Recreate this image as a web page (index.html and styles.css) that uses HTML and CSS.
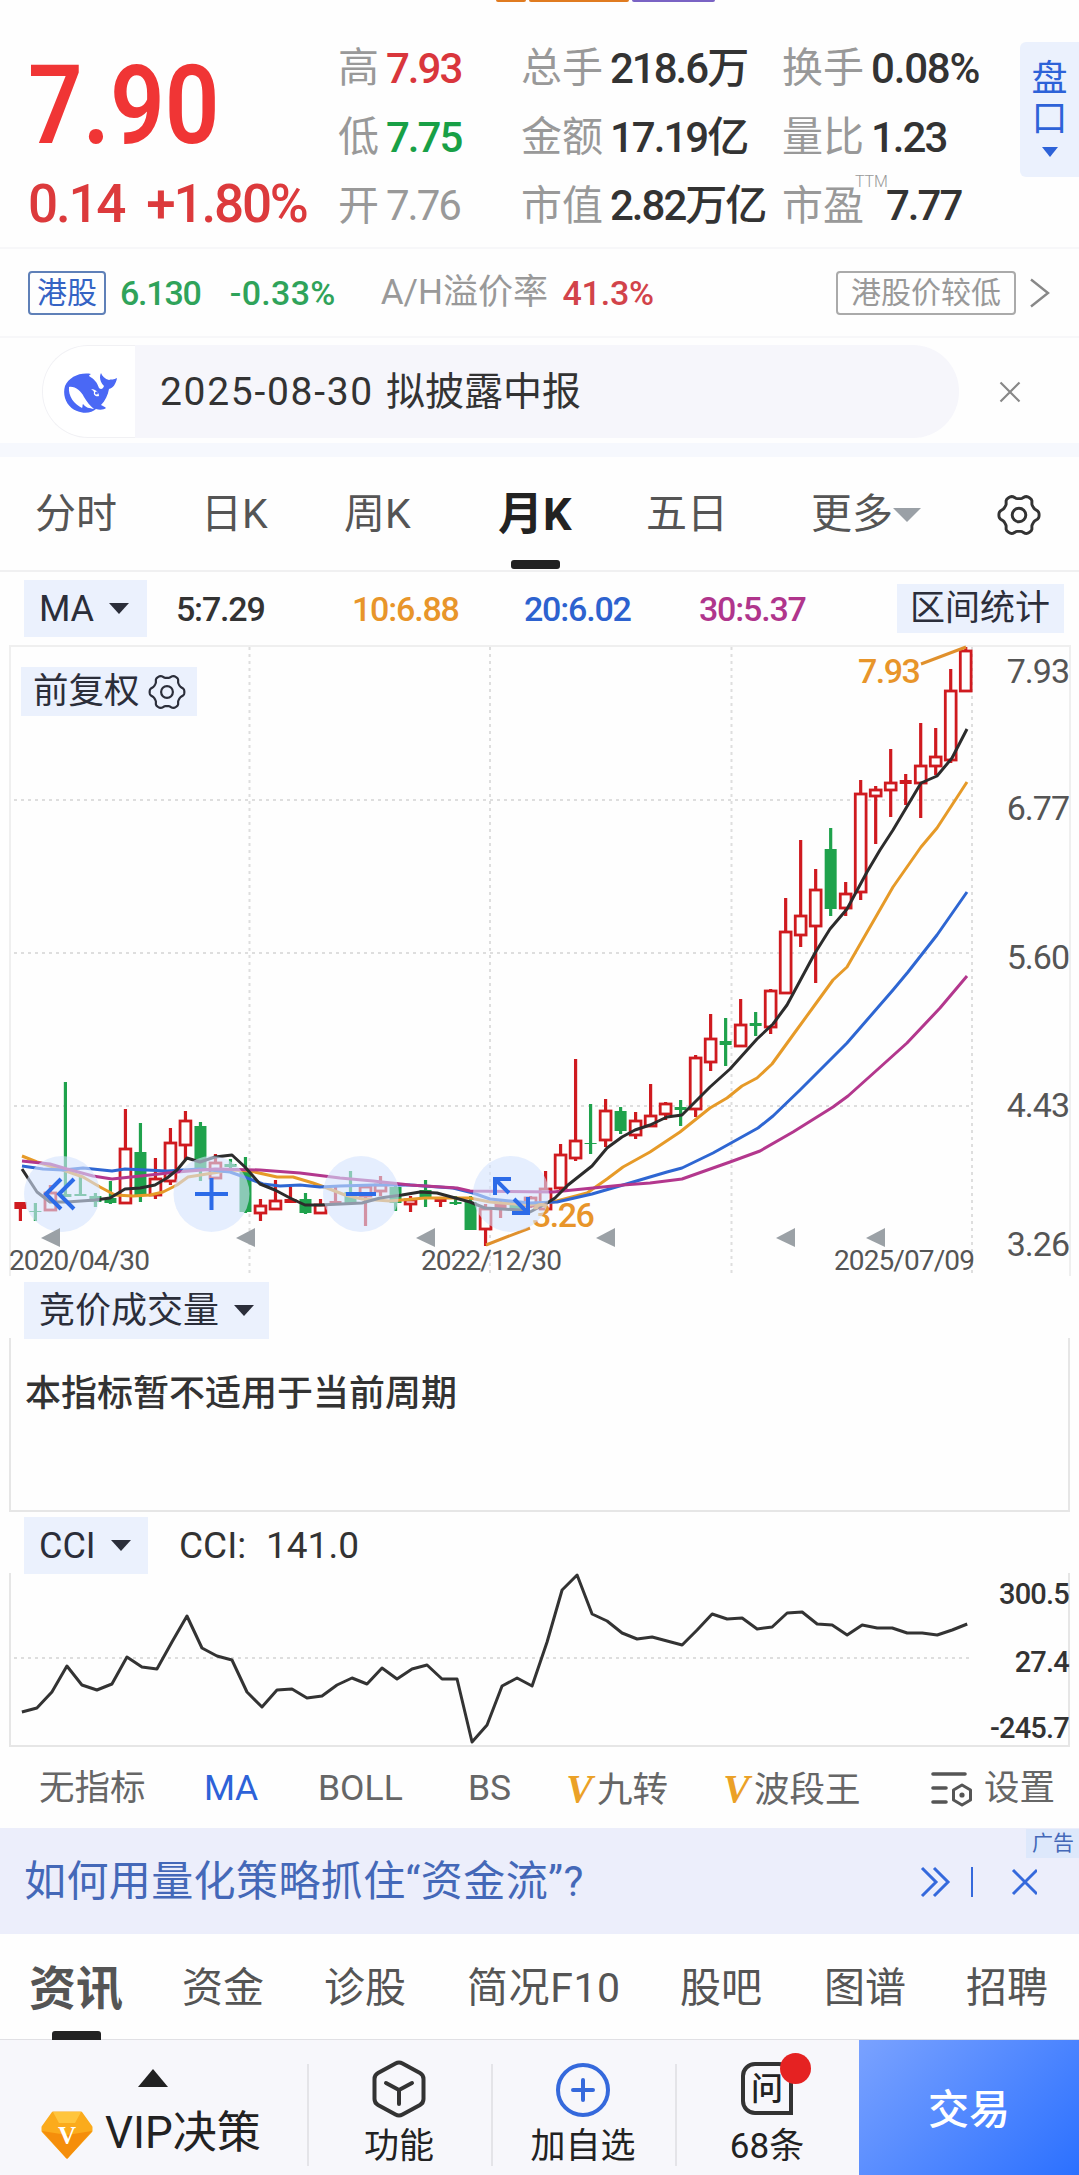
FILE: index.html
```html
<!DOCTYPE html>
<html lang="zh-CN">
<head>
    <meta charset="UTF-8">
    <meta name="viewport" content="width=device-width, initial-scale=1.0">
    <title>月K</title>
    <link rel="stylesheet" href="styles.css">
</head>
<body>
    <div class="strip"><i></i><i></i><i class="purple"></i></div>

    <section class="quote">
        <div class="price">
            <div class="now">7.90</div>
            <div class="change"><span>0.14</span><span>+1.80%</span></div>
        </div>
        <div class="stats">
            <div><label>高</label><b class="red">7.93</b></div>
            <div><label>总手</label><b>218.6万</b></div>
            <div><label>换手</label><b class="wide">0.08%</b></div>
            <div><label>低</label><b class="green">7.75</b></div>
            <div><label>金额</label><b>17.19亿</b></div>
            <div><label>量比</label><b>1.23</b></div>
            <div><label>开</label><b class="grey">7.76</b></div>
            <div><label>市值</label><b>2.82万亿</b></div>
            <div><label>市盈<sup>TTM</sup></label><b class="pe">7.77</b></div>
        </div>
        <div class="pankou"><span>盘</span><span>口</span><i class="tri"></i></div>
    </section>

    <section class="hk">
        <span class="tag">港股</span>
        <span class="hk-price">6.130</span>
        <span class="hk-pct">-0.33%</span>
        <span class="hk-label">A/H溢价率</span>
        <span class="hk-prem">41.3%</span>
        <span class="tag tag-grey">港股价较低</span>
        <svg class="hk-more" width="22" height="30" viewBox="0 0 22 30"><path d="M2 1.5L19 15L2 28.5" fill="none" stroke="#888" stroke-width="2.4"/></svg>
    </section>

    <section class="notice">
        <div class="pill">
            <div class="whale">
                <svg width="56" height="42" viewBox="0 0 56 42">
                    <path fill="#4a68f5" d="M28 2C17 0 6 5 2 14C-1 24 4 35 14 39C21 42 29 41 33 37C36 38 41 38 43 36C42 35 40 34 38 33C42 29 45 23 46 17C50 16 53 12 54 6C51 8 48 7 46 8C42 7 39 4 38 1C36 5 37 10 41 14C40 17 38 18 36 16C34 10 31 7 26 4C26 3 27 3 28 2Z"/>
                    <path fill="#fff" d="M6 15C12 14 18 19 21 25C24 30 27 34 31 37C26 36 23 36 20 32C19 33 20 35 19 36C11 32 5 24 6 15Z"/>
                    <path fill="#fff" d="M28 17C32 17 36 20 36 24C33 25 30 23 31 20C30 18 29 18 28 17Z"/>
                    <circle cx="33.500" cy="21" r="1.500" fill="#4a68f5"/>
                </svg>
            </div>
            <div class="notice-text"><span class="date">2025-08-30</span><span>拟披露中报</span></div>
        </div>
        <svg class="close" width="22" height="22" viewBox="0 0 22 22"><path d="M1.500 1.500L20.500 20.500M20.500 1.500L1.500 20.500" stroke="#888" stroke-width="2.2"/></svg>
    </section>

    <nav class="periods">
        <span>分时</span>
        <span>日K</span>
        <span>周K</span>
        <span class="on">月K</span>
        <span>五日</span>
        <span class="more">更多<i class="tri"></i></span>
        <svg width="44" height="44" viewBox="0 0 42 42" fill="none" stroke="#333" stroke-width="2.800"><path class="gear" d=""/><circle cx="21" cy="21" r="6.500"/></svg>
    </nav>

    <section class="ma">
        <span class="btn">MA<i class="tri"></i></span>
        <span class="num">5:7.29</span>
        <span class="num orange">10:6.88</span>
        <span class="num blue">20:6.02</span>
        <span class="num purple">30:5.37</span>
        <span class="btn range">区间统计</span>
    </section>

    <section class="kline">
        <svg id="kline" width="1079" height="632" viewBox="0 645 1079 632"></svg>
        <div class="btn fuquan">前复权<svg width="38" height="38" viewBox="0 0 42 42" fill="none" stroke="#2b2e3a" stroke-width="2.400"><path class="gear" d=""/><circle cx="21" cy="21" r="6.500"/></svg></div>
    </section>

    <section class="sub">
        <div class="sub-head"><span class="btn">竞价成交量<i class="tri"></i></span></div>
        <div class="sub-body">本指标暂不适用于当前周期</div>
    </section>

    <section class="sub cci">
        <div class="sub-head"><span class="btn">CCI<i class="tri"></i></span><span class="cci-val">CCI:</span><span>141.0</span></div>
        <div class="sub-body"><svg id="cci" width="1059" height="171" viewBox="11 1574 1059 171"></svg></div>
    </section>

    <nav class="indicators">
        <span>无指标</span>
        <span class="on">MA</span>
        <span>BOLL</span>
        <span>BS</span>
        <span><em>V</em>九转</span>
        <span><em>V</em>波段王</span>
        <span class="set">
            <svg width="42" height="36" viewBox="0 0 42 36" fill="none" stroke="#555" stroke-width="3.600" stroke-linecap="round"><path d="M2 3H34M2 17H15M2 31H15"/><path stroke-width="3" stroke-linejoin="round" d="M31 14L39.500 19V29L31 34L22.500 29V19Z"/><circle cx="31" cy="24" r="2.600" fill="#555" stroke="none"/></svg>
            设置
        </span>
    </nav>

    <section class="ad">
        <span class="ad-text">如何用量化策略抓住“资金流”?</span>
        <svg width="118" height="32" viewBox="0 0 118 32" fill="none" stroke="#3569dc" stroke-width="3"><path d="M3 2L17 16L3 30M15 2L29 16L15 30M94 4L118 28M118 4L94 28"/><path stroke-width="2" d="M53 1V31"/></svg>
        <span class="ad-tag">广告</span>
    </section>

    <nav class="news">
        <span class="on">资讯</span>
        <span>资金</span>
        <span>诊股</span>
        <span class="f10">简况F10</span>
        <span>股吧</span>
        <span>图谱</span>
        <span>招聘</span>
    </nav>

    <footer>
        <div class="vip">
            <i class="tri"></i>
            <div>
                <svg width="52" height="48" viewBox="0 0 52 48">
                    <path fill="#fbab1c" stroke="#fbab1c" stroke-width="3" stroke-linejoin="round" d="M12 2H40L50 16V20L26 46L2 20V16Z"/>
                    <path fill="#f58e0b" d="M1 20L26 24L51 20L26 48Z"/>
                    <path fill="#ffc53d" d="M12 1H40L34 12H18Z"/>
                    <text x="26" y="33" text-anchor="middle">V</text>
                </svg>
                <span>VIP决策</span>
            </div>
        </div>
        <div class="item">
            <svg width="54" height="58" viewBox="0 0 54 58" fill="none" stroke="#333" stroke-width="4" stroke-linecap="round" stroke-linejoin="round"><path d="M23.500 3.500Q27 1.500 30.500 3.500L48 13Q51.500 15 51.500 19V39Q51.500 43 48 45L30.500 54.500Q27 56.500 23.500 54.500L6 45Q2.500 43 2.500 39V19Q2.500 15 6 13Z"/><path d="M14 23L27 30L40 23M27 30V44"/></svg>
            <span>功能</span>
        </div>
        <div class="item">
            <svg width="54" height="58" viewBox="0 0 54 58" fill="none" stroke="#3569dc" stroke-width="4" stroke-linecap="round"><circle cx="27" cy="30" r="25"/><path d="M17 30H37M27 20V40"/></svg>
            <span>加自选</span>
        </div>
        <div class="item">
            <div class="ask">问</div>
            <span>68条</span>
        </div>
        <div class="trade">交易</div>
    </footer>
    <script src="chart.js"></script>
</body>
</html>
```
FILE: styles.css
```css
* {
    box-sizing: border-box;
}
body {
    margin: 0;
    width: 1079px;
    height: 2175px;
    overflow: hidden;
    background: #fefefe;
    color: #333;
    font-family: Roboto, "Noto Sans CJK SC", sans-serif;
    font-kerning: none;
    line-height: 1;
    white-space: nowrap;
}
svg {
    display: block;
    flex: none;
}
.tri {
    width: 0;
    height: 0;
    border: 10px solid transparent;
    border-top: 11px solid #2b2e3a;
    border-bottom: 0;
}
.red { color: #d9363c; }
.green { color: #18a046; }
.grey { color: #999; }
.orange { color: #e8952a; }
.blue { color: #2d62cf; }
.purple { color: #b0358c; }

/* top */
.strip {
    display: flex;
    gap: 3px;
    height: 3px;
    padding-left: 496px;
}
.strip i {
    width: 30px;
    height: 2px;
    background: #e07b20;
    border-radius: 0 0 3px 3px;
}
.strip i:nth-child(2) { width: 100px; }
.strip i.purple {
    width: 83px;
    background: #7a63c4;
}
.quote {
    display: flex;
    height: 244px;
}
.price {
    width: 338px;
    padding: 49px 0 0 28px;
}
.now {
    height: 108px;
    line-height: 108px;
    font-size: 109px;
    font-weight: 600;
    color: #f03535;
    transform: scaleX(.88);
    transform-origin: left;
}
.change {
    display: flex;
    gap: 22px;
    margin-top: 18px;
    font-size: 53px;
    font-weight: 500;
    letter-spacing: -2.2px;
    color: #dc3a3c;
}
.stats {
    display: grid;
    grid-template-columns: 183px 261px 238px;
    grid-template-rows: 69px 69px 68px;
    width: 682px;
    padding-top: 31px;
    align-items: center;
}
.stats div {
    display: flex;
    align-items: center;
    font-size: 41px;
}
.stats label {
    position: relative;
    color: #999;
}
.stats b {
    margin-left: 7px;
    font-weight: 500;
    font-size: 42px;
    letter-spacing: -2px;
}
.stats b.grey { font-weight: 400; }
.stats b.wide { letter-spacing: -1.2px; }
.stats .pe { margin-left: 22px; }
.stats sup {
    position: absolute;
    left: 73px;
    top: -12px;
    font-size: 16px;
    font-weight: 300;
    line-height: 1;
}
.pankou {
    display: flex;
    flex-direction: column;
    align-items: center;
    width: 59px;
    height: 135px;
    margin-top: 39px;
    padding-top: 19px;
    background: #ebf1fd;
    border-radius: 6px 0 0 6px;
    color: #2d62d8;
    font-size: 36px;
}
.pankou span { height: 40px; }
.pankou .tri {
    margin-top: 6px;
    border-width: 8px;
    border-top: 10px solid #2d62d8;
    border-bottom: 0;
}

/* hk */
.hk {
    display: flex;
    align-items: center;
    height: 91px;
    padding: 0 28px;
    border-top: 2px solid #f7f7f9;
    border-bottom: 2px solid #f7f7f9;
    font-size: 34px;
    font-weight: 500;
    color: #2fa35a;
}
.tag {
    width: 78px;
    height: 44px;
    border: 2px solid #5f80b8;
    border-radius: 4px;
    font-size: 30px;
    line-height: 39px;
    font-weight: 400;
    text-align: center;
    color: #3463c4;
}
.hk-price {
    width: 110px;
    margin-left: 14px;
    letter-spacing: -1.2px;
}
.hk-pct {
    width: 151px;
    letter-spacing: .3px;
}
.hk-label {
    width: 182px;
    font-size: 35px;
    font-weight: 400;
    color: #999;
}
.hk-prem {
    width: 274px;
    letter-spacing: -.2px;
    color: #d2434a;
}
.tag-grey {
    width: 180px;
    border-color: #aaa;
    color: #999;
}
.hk-more { margin-left: 13px; }

/* notice */
.notice {
    display: flex;
    align-items: center;
    height: 119px;
    padding: 2px 58px 0 42px;
    border-bottom: 14px solid #f6f8fd;
}
.pill {
    display: flex;
    width: 918px;
    height: 93px;
    overflow: hidden;
    border-radius: 46px;
    background: #f6f6fb;
}
.whale {
    width: 93px;
    padding: 26px 0 0 20px;
    border: 1px solid #f1f1f4;
    border-right: 0;
    border-radius: 46px 0 0 46px;
    background: #fff;
}
.notice-text {
    display: flex;
    align-items: center;
    gap: 12px;
    padding: 2px 0 0 25px;
    font-size: 39px;
}
.date { letter-spacing: 1.7px; }
.close { margin-left: 40px; }

/* periods */
.periods {
    display: grid;
    grid-template-columns: 166px 143px 154px 148px 165px 186px 44px;
    align-items: center;
    height: 115px;
    padding: 2px 0 0 35px;
    border-bottom: 2px solid #f0f0f1;
    font-size: 41px;
    color: #555;
}
.periods .on {
    position: relative;
    font-size: 45px;
    font-weight: 700;
    color: #222;
}
.periods .on::after {
    content: "";
    position: absolute;
    left: 13px;
    top: 68px;
    width: 49px;
    height: 9px;
    border-radius: 3px;
    background: #222;
}
.more {
    display: flex;
    align-items: center;
}
.more .tri {
    border-width: 14px;
    border-top: 14px solid #9aa0a6;
    border-bottom: 0;
}

/* buttons above charts */
.btn {
    display: flex;
    align-items: center;
    height: 57px;
    padding-left: 15px;
    background: #ebf1fd;
    color: #2b2e3a;
    font-size: 36px;
}
.btn .tri { margin-left: 15px; }
.ma {
    display: grid;
    grid-template-columns: 152px 176px 172px 175px 198px 167px;
    align-items: center;
    height: 73px;
    padding-left: 24px;
}
.ma .btn:first-child { width: 123px; }
.num {
    font-size: 34px;
    font-weight: 500;
    letter-spacing: -1.2px;
}
.ma .range {
    height: 49px;
    padding-left: 13px;
    font-size: 35px;
}
.kline {
    position: relative;
    height: 632px;
}
.fuquan {
    position: absolute;
    left: 21px;
    top: 22px;
    width: 176px;
    height: 49px;
    padding-left: 12px;
    font-size: 35.500px;
}
.fuquan svg { margin-left: 8px; }

/* svg text */
.axis { font-size: 34px; fill: #555; letter-spacing: -1px; }
.day { font-size: 28px; fill: #555; letter-spacing: -.9px; }
.mark { font-size: 34px; font-weight: 500; fill: #e8952a; letter-spacing: -1.500px; }
.small { font-size: 29px; fill: #333; letter-spacing: -.8px; }

/* sub charts */
.sub {
    height: 235px;
    padding: 6px 9px 0;
}
.sub-head {
    display: flex;
    align-items: center;
    height: 55px;
    padding-left: 15px;
    font-size: 37px;
}
.sub-head .btn { width: 245px; }
.sub-body {
    height: 174px;
    padding: 38px 14px;
    border: 2px solid #e6e6e6;
    border-top: 0;
    font-size: 36px;
    font-weight: 500;
}
.cci .sub-head .btn { width: 124px; }
.cci .sub-body { padding: 0; }
.cci-val {
    width: 87px;
    margin-left: 31px;
}

/* indicators */
.indicators {
    display: grid;
    grid-template-columns: 165px 114px 150px 98px 157px 208px 130px;
    align-items: center;
    height: 81px;
    padding: 3px 0 0 39px;
    font-size: 35.500px;
    color: #666;
}
.indicators .on { color: #2d62d8; }
.indicators em {
    display: inline-block;
    width: 31px;
    font: bold italic 40px "Liberation Serif", serif;
    line-height: 1;
    color: #eba127;
}
.set {
    display: flex;
    align-items: center;
    gap: 11px;
}

/* ad */
.ad {
    position: relative;
    display: flex;
    align-items: center;
    justify-content: space-between;
    height: 106px;
    padding: 2px 42px 0 24px;
    background: #eceefb;
    color: #4468b8;
    font-size: 42px;
}
.ad-text { letter-spacing: .4px; }
.ad-tag {
    position: absolute;
    top: 1px;
    right: 0;
    width: 53px;
    height: 29px;
    padding-left: 6px;
    background: #dde8fb;
    font-size: 21px;
    line-height: 28px;
}

/* news tabs */
.news {
    display: grid;
    grid-template-columns: 153px 142px 143px 213px 144px 142px 90px;
    align-items: center;
    height: 106px;
    padding: 3px 0 0 29px;
    border-bottom: 1px solid #e0e0e4;
    font-size: 41px;
    color: #555;
}
.news .on {
    position: relative;
    font-size: 47px;
    font-weight: 700;
}
.news .on::after {
    content: "";
    position: absolute;
    left: 23px;
    top: 66px;
    width: 49px;
    height: 9px;
    background: #222;
    border-radius: 3px 3px 0 0;
}
.news .f10 { letter-spacing: .6px; }

/* footer */
footer {
    display: flex;
    height: 136px;
    background: #f7f7fb;
    color: #222;
    font-size: 35px;
}
.vip {
    width: 307px;
    padding-top: 29px;
}
.vip .tri {
    display: block;
    margin-left: 138px;
    border-width: 15px;
    border-top: 0;
    border-bottom: 18px solid #222;
}
.vip div {
    display: flex;
    gap: 12px;
    padding: 24px 0 0 41px;
    font-size: 44px;
}
.vip text {
    font: bold 25px "Liberation Serif", serif;
    fill: #fff;
}
.item {
    position: relative;
    display: flex;
    flex-direction: column;
    align-items: center;
    width: 184px;
    padding-top: 20px;
}
.item::before {
    content: "";
    position: absolute;
    left: 0;
    top: 24px;
    width: 2px;
    height: 102px;
    background: #e4e4e8;
}
.item span { margin-top: 11px; }
.ask {
    position: relative;
    width: 52px;
    height: 53px;
    margin: 2px 0 3px;
    border: 4px solid #333;
    border-radius: 14px 14px 0 14px;
    font-size: 32px;
    font-weight: 500;
    line-height: 46px;
    text-align: center;
}
.ask::after {
    content: "";
    position: absolute;
    left: 35px;
    top: -13px;
    width: 31px;
    height: 31px;
    border-radius: 50%;
    background: #e52222;
}
.trade {
    flex: 1;
    padding-top: 50px;
    background: linear-gradient(135deg, #7aa2ff, #2b70ff);
    color: #fff;
    font-size: 41px;
    font-weight: 500;
    text-align: center;
}
```
FILE: chart.js
```js
const RED = '#cf1a1f', GREEN = '#1fa24c';

// type (r hollow, f filled red, g green), high, body top, body bottom, low
const candles = [
    ['f',1202,1202,1209,1221],['g',1203,1211,1212,1221],['r',1185,1193,1210,1210],['g',1082,1194,1197,1197],
    ['g',1177,1194,1196,1196],['g',1193,1196,1202,1207],['g',1181,1198,1203,1204],['r',1109,1149,1203,1203],
    ['g',1123,1152,1195,1202],['r',1158,1179,1195,1199],['r',1128,1143,1181,1185],['r',1111,1121,1145,1160],
    ['g',1122,1126,1170,1181],['r',1154,1163,1178,1178],['g',1159,1164,1167,1169],['g',1157,1170,1212,1213],
    ['r',1199,1206,1213,1221],['r',1180,1201,1209,1209],['f',1187,1199,1203,1203],['g',1193,1199,1213,1214],
    ['r',1199,1205,1213,1213],['f',1187,1201,1203,1204],['g',1171,1192,1204,1204],['r',1186,1187,1196,1226],
    ['r',1176,1185,1191,1196],['g',1184,1187,1203,1211],['r',1196,1200,1204,1212],['g',1180,1190,1198,1207],
    ['f',1197,1199,1202,1207],['g',1196,1202,1204,1205],['g',1196,1202,1230,1230],['r',1204,1209,1229,1246],
    ['f',1201,1202,1208,1218],['g',1201,1202,1211,1212],['r',1196,1198,1206,1208],['r',1171,1189,1209,1210],
    ['r',1144,1155,1188,1190],['r',1059,1141,1158,1161],['g',1104,1143,1144,1154],['r',1099,1111,1140,1147],
    ['g',1107,1111,1131,1134],['r',1112,1121,1135,1139],['r',1084,1116,1126,1127],['r',1102,1104,1114,1120],
    ['g',1100,1107,1110,1126],['r',1055,1058,1109,1117],['r',1014,1039,1062,1071],['g',1018,1041,1045,1066],
    ['r',999,1025,1046,1046],['g',1012,1023,1026,1036],['r',989,991,1027,1034],['r',898,932,993,993],
    ['r',840,916,935,947],['r',869,890,926,983],['g',828,849,909,916],['r',882,894,908,916],
    ['r',780,794,892,900],['r',786,790,796,844],['r',749,783,790,817],['f',774,780,784,805],
    ['r',723,766,783,818],['r',728,757,766,775],['r',669,691,760,763],['r',647,651,691,691]
];

const ma = {
    '#e69a28': '22,1156 37,1162 63,1170 83,1177 100,1187 115,1195 133,1196 150,1195 163,1192 177,1185 188,1177 213,1173 233,1170 250,1171 277,1177 293,1177 313,1183 327,1188 345,1195 362,1199 390,1201 425,1198 470,1198 490,1202 527,1205 553,1202 587,1193 607,1179 623,1167 650,1152 680,1132 710,1108 727,1098 742,1086 757,1078 772,1064 793,1035 817,1002 833,980 847,967 870,927 893,887 921,847 937,828 967,782',
    '#2e66d2': '22,1166 43,1169 63,1170 83,1168 112,1171 125,1169 167,1171 200,1169 230,1172 247,1178 263,1184 280,1186 300,1185 320,1187 340,1186 373,1185 410,1185 453,1188 473,1193 490,1199 530,1203 557,1202 592,1194 623,1185 650,1177 667,1172 682,1168 713,1153 758,1128 773,1116 800,1090 847,1043 893,990 908,972 937,935 967,892',
    '#b3378d': '22,1161 50,1164 67,1169 93,1176 112,1179 150,1175 177,1172 215,1169 260,1170 300,1173 340,1178 373,1181 410,1185 457,1188 470,1191 553,1192 593,1188 623,1185 650,1183 682,1179 730,1162 760,1151 793,1132 817,1117 833,1107 848,1096 877,1070 907,1043 940,1008 967,976',
    '#2c2c2c': '22,1169 37,1192 50,1202 67,1202 95,1200 110,1198 125,1189 140,1188 155,1185 167,1178 177,1170 187,1158 200,1162 215,1157 232,1155 245,1167 260,1184 275,1190 290,1198 305,1205 320,1205 362,1203 380,1198 402,1195 420,1192 437,1193 470,1202 485,1208 520,1210 530,1212 547,1203 555,1198 568,1185 592,1166 607,1148 622,1137 635,1130 650,1125 667,1117 682,1115 710,1087 730,1069 757,1039 773,1024 787,1005 815,953 830,929 847,909 867,872 880,850 893,830 921,783 937,776 952,758 967,729'
};

const cci = [1713,1709,1693,1667,1686,1691,1685,1658,1668,1670,1643,1617,1649,1657,1661,1693,
    1708,1691,1690,1699,1697,1686,1679,1685,1669,1680,1670,1666,1680,1680,1743,1726,
    1687,1679,1687,1643,1591,1576,1615,1622,1634,1640,1638,1642,1646,1631,1615,1620,
    1619,1630,1628,1614,1613,1625,1626,1636,1626,1629,1629,1634,1634,1636,1631,1625];

const x = i => 20.4 + i * 15.005;
const dotted = d => `<path d="${d}" stroke="#dedede" stroke-width="2" stroke-dasharray="3 4"/>`;
const text = (cls, tx, ty, s, anchor = 'start') => `<text class="${cls}" x="${tx}" y="${ty}" text-anchor="${anchor}">${s}</text>`;

let k = '<path d="M10 1276V646H1070V1276" fill="none" stroke="#efefef" stroke-width="2"/>';
k += [249.5, 490, 731.5, 972].map(v => dotted(`M${v} 647V1276`)).join('');
k += [800, 953, 1106].map(v => dotted(`M14 ${v}H972`)).join('');
k += text('day', 9, 1270, '2020/04/30') + text('day', 421, 1270, '2022/12/30') + text('day', 974, 1270, '2025/07/09', 'end');

candles.forEach(([t, hi, top, bot, lo], i) => {
    const c = t === 'g' ? GREEN : RED, cx = x(i);
    k += `<path d="M${cx} ${hi}V${top}M${cx} ${bot}V${lo}" stroke="${c}" stroke-width="3.2"/>`;
    if (t === 'r') {
        k += `<rect x="${cx - 5.4}" y="${top}" width="10.800" height="${bot - top}" fill="#fefefe" stroke="${c}" stroke-width="2.8"/>`;
    } else {
        k += `<rect x="${cx - 6}" y="${top}" width="12" height="${bot - top}" fill="${c}"/>`;
    }
});
for (const c in ma) {
    k += `<polyline points="${ma[c]}" fill="none" stroke="${c}" stroke-width="3" stroke-linejoin="round"/>`;
}
k += '<path d="M921 664L966 647M486 1245L530 1228" stroke="#e0902c" stroke-width="3"/>';
k += text('mark', 858, 683, '7.93') + text('mark', 532, 1227, '3.26');

// control buttons over the chart
k += [62, 211.500, 361, 511].map(v => `<circle cx="${v}" cy="1194" r="38" fill="#d3e2fd" fill-opacity=".6"/>`).join('');
k += '<g fill="none" stroke="#2c6be8" stroke-width="4"><path d="M61 1179L46 1194L61 1209M74 1179L59 1194L74 1209M195 1194H228M211.500 1178V1210M346 1194H376"/>';
k += '<path d="M495 1195V1179H511M495 1179L509 1193M528 1197V1213H512M528 1213L514 1199"/></g>';
k += [41, 236, 416, 596, 776, 866].map(v => `<path d="M${v} 1238L${v + 19} 1228V1247Z" fill="#9ba1a6"/>`).join('');

[['7.93', 683], ['6.77', 820], ['5.60', 969], ['4.43', 1117], ['3.26', 1256]].forEach(([s, y]) => {
    k += text('axis', 1069, y, s, 'end');
});
document.getElementById('kline').innerHTML = k;

let c = dotted('M14 1659H972');
c += `<polyline points="${cci.map((y, i) => `${x(i) + 1.5},${y}`).join(' ')}" fill="none" stroke="#333" stroke-width="3" stroke-linejoin="round"/>`;
c += text('small', 1069, 1605, '300.5', 'end') + text('small', 1069, 1673, '27.4', 'end') + text('small', 1069, 1739, '-245.7', 'end');
document.getElementById('cci').innerHTML = c;

// gear outline with six soft teeth
let g = '';
for (let a = 0; a < 360; a += 4) {
    const q = a * Math.PI / 180;
    const r = 17.4 + 2 * Math.tanh(1.6 * Math.cos(q * 6));
    g += (a ? 'L' : 'M') + (21 + r * Math.cos(q)).toFixed(1) + ' ' + (21 + r * Math.sin(q)).toFixed(1);
}
document.querySelectorAll('.gear').forEach(p => p.setAttribute('d', g + 'Z'));
```
